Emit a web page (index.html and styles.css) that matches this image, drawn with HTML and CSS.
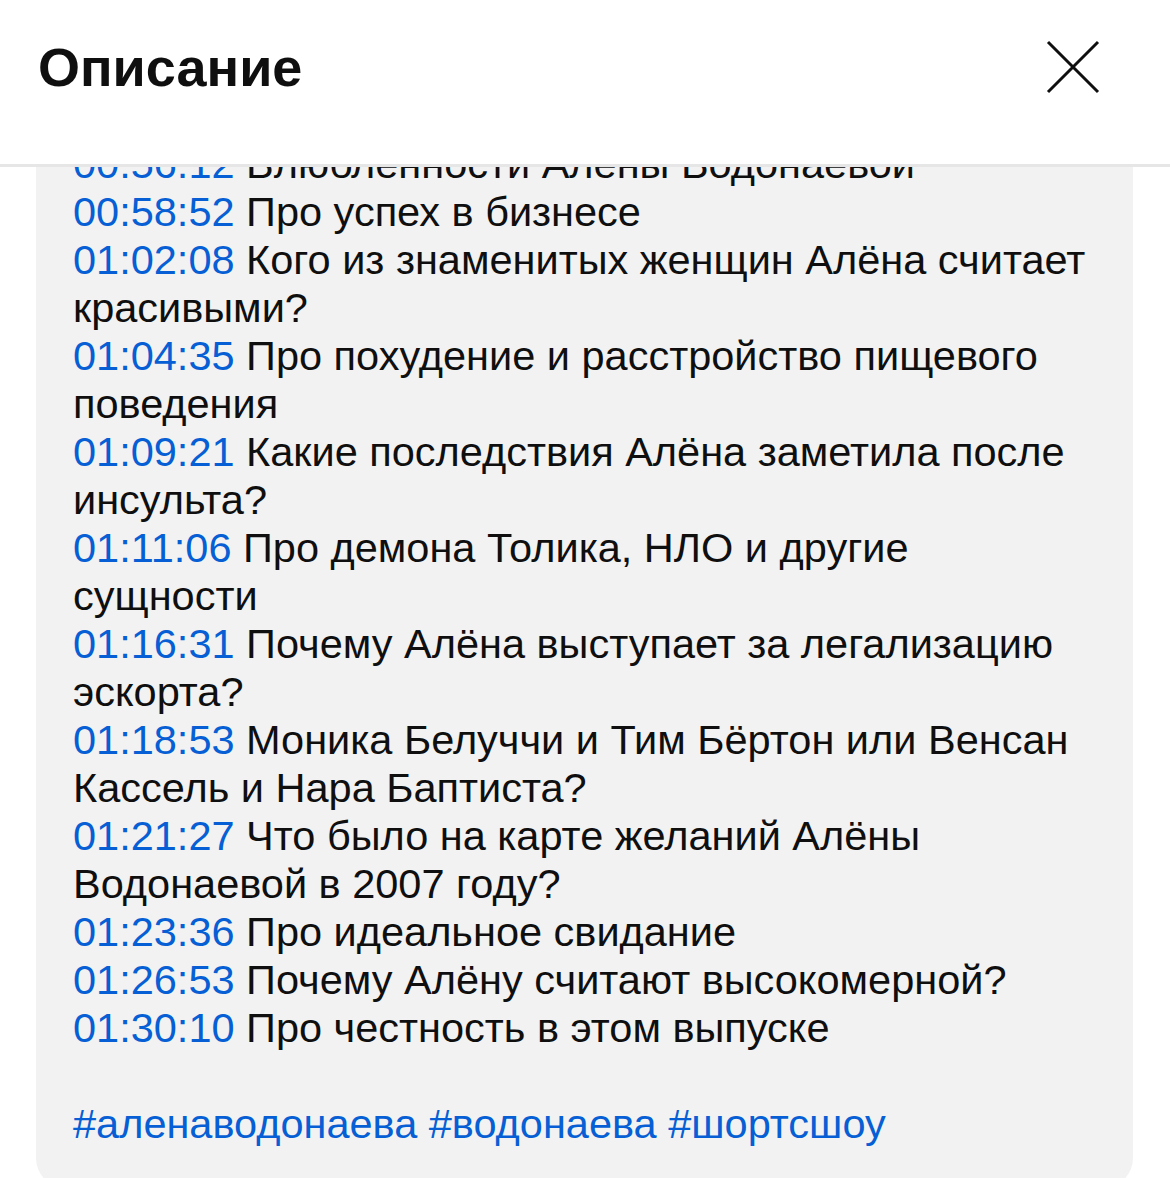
FILE: index.html
```html
<!DOCTYPE html>
<html lang="ru">
<head>
    <meta charset="UTF-8">
    <meta name="viewport" content="width=device-width, initial-scale=1.0">
    <title>Описание</title>
    <link rel="stylesheet" href="styles.css">
</head>
<body>

<div class="sheet">
    <!-- шапка панели -->
    <header class="sheet-header">
        <h1 class="sheet-title">Описание</h1>
        <button class="close-btn" aria-label="Закрыть">
            <svg width="54" height="54" viewBox="0 0 54 54">
                <path d="M2 2 L52 52 M52 2 L2 52" stroke="#0f0f0f" stroke-width="3" fill="none"/>
            </svg>
        </button>
    </header>

    <!-- прокручиваемая часть -->
    <div class="sheet-body">
        <div class="desc-card">
            <div class="chapter"><a class="time">00:56:12</a> Влюбленности Алены Водонаевой</div>
            <div class="chapter"><a class="time">00:58:52</a> Про успех в бизнесе</div>
            <div class="chapter"><a class="time">01:02:08</a> Кого из знаменитых женщин Алёна считает красивыми?</div>
            <div class="chapter"><a class="time">01:04:35</a> Про похудение и расстройство пищевого поведения</div>
            <div class="chapter"><a class="time">01:09:21</a> Какие последствия Алёна заметила после инсульта?</div>
            <div class="chapter"><a class="time">01:11:06</a> Про демона Толика, НЛО и другие сущности</div>
            <div class="chapter"><a class="time">01:16:31</a> Почему Алёна выступает за легализацию эскорта?</div>
            <div class="chapter"><a class="time">01:18:53</a> Моника Белуччи и Тим Бёртон или Венсан Кассель и Нара Баптиста?</div>
            <div class="chapter"><a class="time">01:21:27</a> Что было на карте желаний Алёны Водонаевой в 2007 году?</div>
            <div class="chapter"><a class="time">01:23:36</a> Про идеальное свидание</div>
            <div class="chapter"><a class="time">01:26:53</a> Почему Алёну считают высокомерной?</div>
            <div class="chapter"><a class="time">01:30:10</a> Про честность в этом выпуске</div>

            <p class="tags"><a>#аленаводонаева</a> <a>#водонаева</a> <a>#шортсшоу</a></p>
        </div>
    </div>
</div>

</body>
</html>
```

FILE: styles.css
```css
/* общие стили */
body {
    margin: 0;
    padding: 0;
    font-family: "Liberation Sans", Arial, sans-serif;
    background-color: #fff;
    color: #0f0f0f;
}

.sheet {
    width: 1170px;
    height: 1178px;
    display: flex;
    flex-direction: column;
    overflow: hidden;
}

/* шапка */
.sheet-header {
    height: 167px;
    flex-shrink: 0;
    display: flex;
    align-items: center;
    justify-content: space-between;
    padding: 0 70px 30px 38px;
    box-sizing: border-box;
    border-bottom: 3px solid #e6e6e6;
}

.sheet-title {
    margin: 0;
    font-size: 54px;
    font-weight: 700;
}

.close-btn {
    background: none;
    border: none;
    padding: 0;
    width: 54px;
    height: 54px;
    cursor: pointer;
}

/* тело */
.sheet-body {
    flex: 1;
    overflow: hidden;
    padding: 0 37px 0 36px;
}

.desc-card {
    margin-top: -27px; /* прокручено вверх */
    background-color: #f2f2f2;
    border-radius: 0 0 30px 30px;
    padding: 0 41px 40px 37px;
    font-size: 41.5px;
    line-height: 48px;
}

.time,
.tags a {
    color: #065fd4;
    text-decoration: none;
}

.tags {
    margin: 48px 0 0;
}
```
